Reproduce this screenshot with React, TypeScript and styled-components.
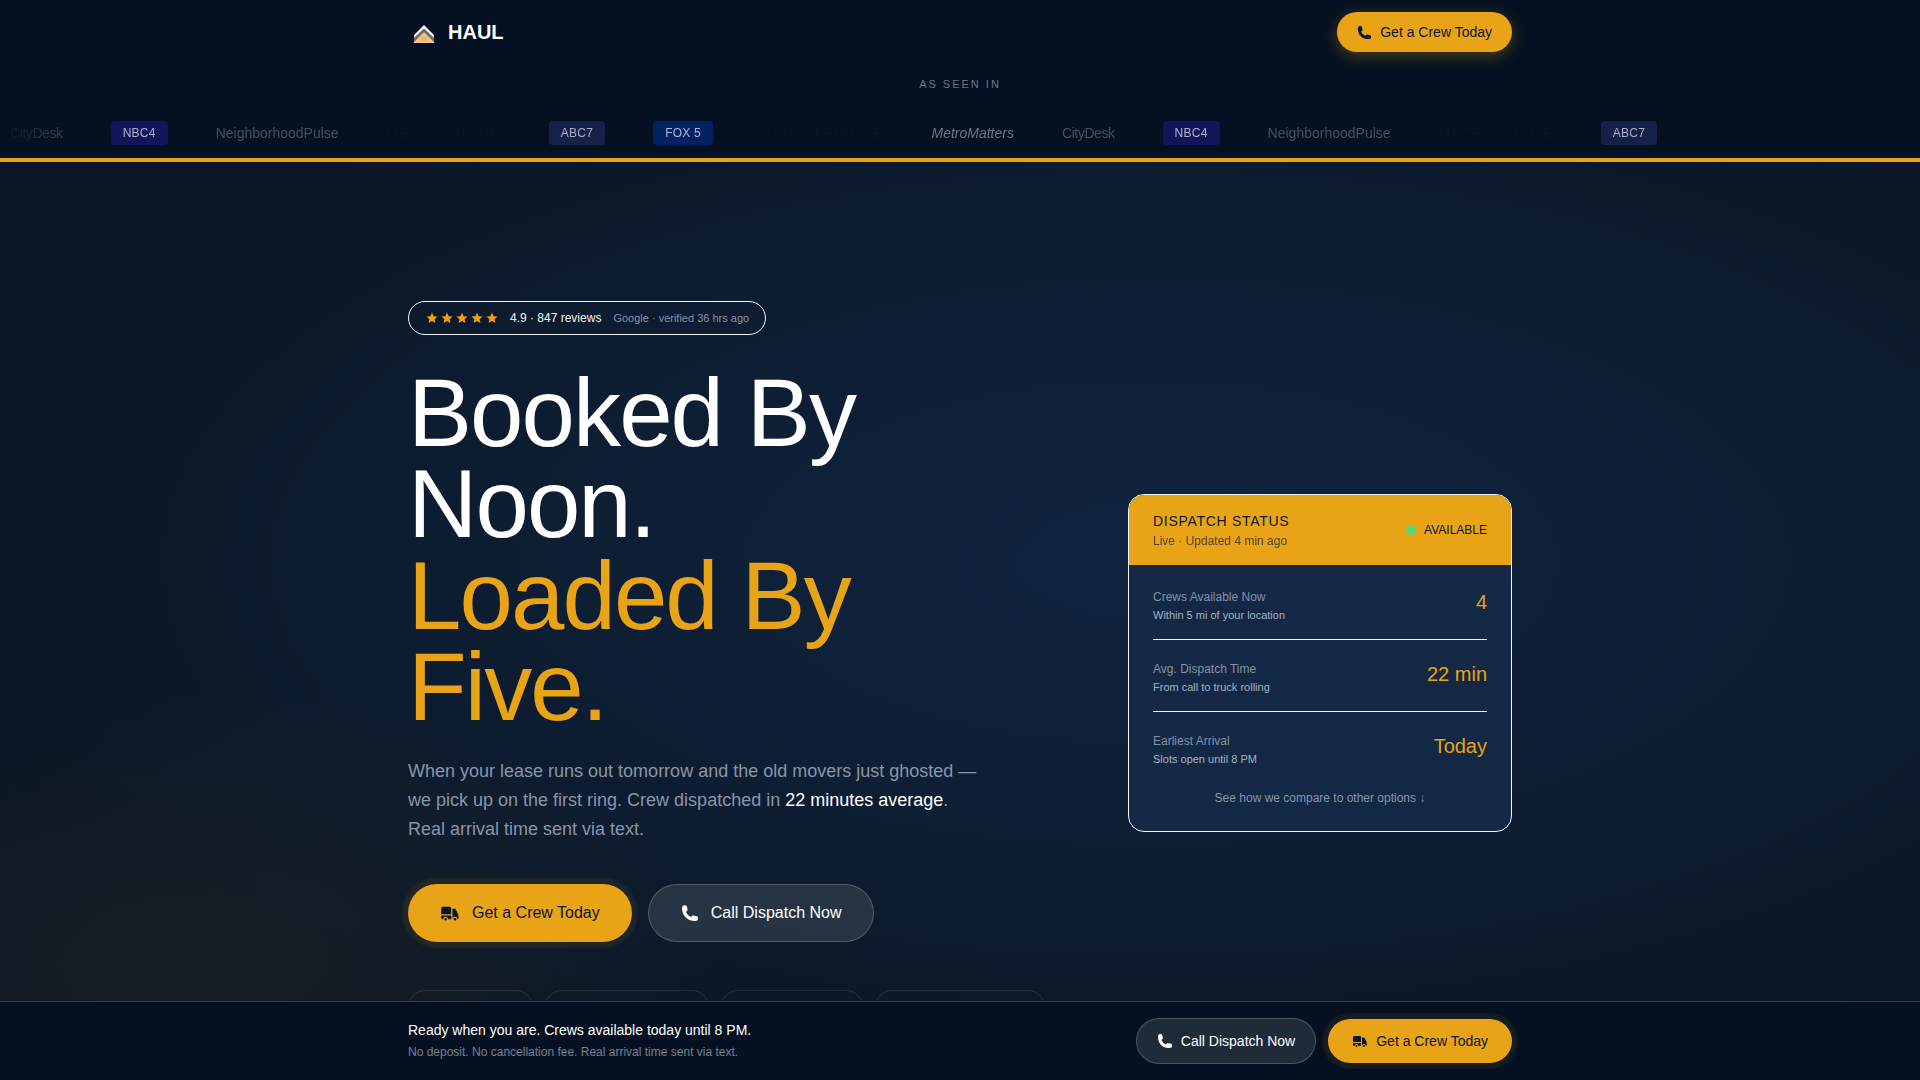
import React from "react";
import styled, { createGlobalStyle, css } from "styled-components";
import { HiPhone, HiTruck } from "react-icons/hi2";

const gold = "#e8a317";
const ink = "#051122";
const paper = "#f1f5f9";

const GlobalStyle = createGlobalStyle`
  *, *::before, *::after { box-sizing: border-box; }
  body {
    margin: 0;
    background: #0a1626;
    color: #ffffff;
    font-family: "Liberation Sans", Arial, sans-serif;
    font-size: 16px;
  }
  h1, h2, p, ul, dl, dd { margin: 0; padding: 0; }
  ul { list-style: none; }
`;

const Scroller = styled.div`
  height: 100vh;
  overflow-x: hidden;
  overflow-y: auto;
  scrollbar-width: none;
`;

const Container = styled.div`
  width: 100%;
  max-width: 1152px;
  margin: 0 auto;
  padding: 0 24px;
`;

/* ---------- Buttons ---------- */

const sizes = {
  small: css`
    padding: 10px 20px;
    gap: 8px;
    font-size: 14px;
    line-height: 20px;
  `,
  medium: css`
    padding: 12px 24px;
    gap: 8px;
    font-size: 14px;
    line-height: 20px;
  `,
  mediumNarrow: css`
    padding: 12px 20px;
    gap: 8px;
    font-size: 14px;
    line-height: 20px;
  `,
  large: css`
    padding: 16px 32px;
    gap: 12px;
    font-size: 16px;
    line-height: 24px;
  `,
};

const Button = styled.button<{ $size: keyof typeof sizes }>`
  display: inline-flex;
  align-items: center;
  justify-content: center;
  border: 0;
  border-radius: 32px;
  font-family: inherit;
  white-space: nowrap;
  cursor: pointer;
  ${(p) => sizes[p.$size]}
`;

const GoldButton = styled(Button)<{ $glow?: boolean }>`
  background: ${gold};
  color: #0a1628;
  box-shadow: ${(p) =>
    p.$glow
      ? "0 4px 16px rgba(232, 163, 23, 0.3)"
      : "0 0 2px 6px rgba(232, 163, 23, 0.08)"};
`;

const GlassButton = styled(Button)`
  background: rgba(255, 255, 255, 0.11);
  border: 1px solid rgba(255, 255, 255, 0.2);
  color: #ffffff;
`;

/* ---------- Header ---------- */

const Header = styled.header`
  background: ${ink};
  border-bottom: 4px solid ${gold};
`;

const TopRow = styled(Container)`
  display: flex;
  align-items: center;
  justify-content: space-between;
  padding-top: 12px;
  padding-bottom: 12px;
`;

const Brand = styled.a`
  display: flex;
  align-items: center;
  gap: 8px;
  color: #ffffff;
  font-size: 20px;
  font-weight: 700;
  text-decoration: none;
`;

const SeenIn = styled.p`
  padding: 12px 0 16px;
  color: #6c7684;
  font-size: 11px;
  line-height: 16px;
  letter-spacing: 2px;
  text-align: center;
`;

const Marquee = styled.div`
  overflow: hidden;
  padding: 13px 0;
  mask-image: linear-gradient(
    to right,
    transparent,
    #000 80px,
    #000 calc(100% - 80px),
    transparent
  );
`;

const Track = styled.ul`
  display: flex;
  align-items: center;
  gap: 48px;
  width: max-content;
  padding-left: 10px;
`;

const Outlet = styled.li<{
  $color: string;
  $fill?: string;
  $italic?: boolean;
  $spacing?: string;
}>`
  color: ${(p) => p.$color};
  font-size: 14px;
  font-style: ${(p) => (p.$italic ? "italic" : "normal")};
  line-height: 24px;
  letter-spacing: ${(p) => p.$spacing ?? "normal"};
  white-space: nowrap;
  ${(p) =>
    p.$fill &&
    css`
      padding: 0 12px;
      border-radius: 4px;
      background: ${p.$fill};
      font-size: 12px;
    `}
`;

/* ---------- Hero ---------- */

const Hero = styled.main`
  display: flex;
  align-items: center;
  min-height: calc(100vh - 79px);
  background:
    radial-gradient(ellipse 40% 40% at 10% 80%, rgba(232, 163, 23, 0.06), transparent 70%),
    radial-gradient(ellipse 70% 60% at 60% 40%, #11253f, transparent 90%),
    #0a1626;
`;

const HeroGrid = styled(Container)`
  display: grid;
  grid-template-columns: minmax(0, 1fr) 384px;
  align-items: center;
  gap: 64px;
`;

const Rating = styled.div`
  display: inline-flex;
  align-items: center;
  gap: 12px;
  height: 34px;
  padding: 0 16px 0 17px;
  border: 1px solid ${paper};
  border-radius: 17px;
  color: ${paper};
  font-size: 12px;
  vertical-align: top;
`;

const Stars = styled.span`
  display: flex;
  gap: 3px;
  color: #f59e0b;
`;

const Source = styled.span`
  color: #8290a3;
  font-size: 11px;
`;

const Headline = styled.h1`
  margin-top: 32px;
  font-size: 96px;
  font-weight: 400;
  line-height: 0.95;
  letter-spacing: -0.02em;
`;

const Accent = styled.span`
  display: block;
  padding-top: 1px;
  color: ${gold};
`;

const Lead = styled.p`
  max-width: 576px;
  margin-top: 24px;
  color: #8896a8;
  font-size: 18px;
  line-height: 1.625;
`;

const Strong = styled.strong`
  color: #ffffff;
  font-weight: 400;
`;

const Actions = styled.div`
  display: flex;
  gap: 16px;
  margin-top: 40px;
`;

const TrustRow = styled.ul`
  display: flex;
  gap: 12px;
  margin-top: 48px;
`;

const TrustPill = styled.li<{ $width: number }>`
  width: ${(p) => p.$width}px;
  height: 34px;
  border: 1px solid rgba(255, 255, 255, 0.1);
  border-radius: 17px;
`;

/* ---------- Dispatch card ---------- */

const Card = styled.section`
  overflow: hidden;
  border: 1px solid ${paper};
  border-radius: 16px;
  background: #122845;
`;

const CardHead = styled.div`
  display: flex;
  align-items: center;
  justify-content: space-between;
  padding: 16px 24px;
  background: ${gold};
  color: #0a1628;
`;

const CardTitle = styled.h2`
  font-size: 14px;
  font-weight: 400;
  line-height: 20px;
  letter-spacing: 0.05em;
`;

const CardNote = styled.p`
  margin-top: 2px;
  font-size: 12px;
  line-height: 16px;
  opacity: 0.7;
`;

const Status = styled.span`
  display: flex;
  align-items: center;
  gap: 8px;
  font-size: 12px;
`;

const Dot = styled.span`
  width: 10px;
  height: 10px;
  border-radius: 50%;
  background: #56d975;
`;

const CardBody = styled.div`
  padding: 23px 24px;
`;

const Stats = styled.dl`
  display: grid;
  gap: 20px;
`;

const Stat = styled.div`
  display: flex;
  align-items: flex-start;
  justify-content: space-between;

  &:not(:last-child) {
    padding-bottom: 15px;
    border-bottom: 1px solid ${paper};
  }
`;

const StatLabel = styled.dt`
  color: #8492a6;
  font-size: 12px;
  line-height: 18px;
`;

const StatHint = styled.span`
  display: block;
  color: #a5b1c2;
  font-size: 11px;
  line-height: 18px;
`;

const StatValue = styled.dd`
  color: ${gold};
  font-size: 20px;
  line-height: 28px;
`;

const Compare = styled.a`
  display: block;
  margin-top: 20px;
  color: #8896a8;
  font-size: 12px;
  line-height: 20px;
  text-align: center;
  text-decoration: none;
`;

/* ---------- Sticky bar ---------- */

const Bar = styled.aside`
  position: fixed;
  inset: auto 0 0;
  background: ${ink};
  border-top: 1px solid rgba(232, 163, 23, 0.3);
`;

const BarRow = styled(Container)`
  display: flex;
  align-items: center;
  justify-content: space-between;
  padding-top: 16px;
  padding-bottom: 16px;
`;

const BarTitle = styled.p`
  font-size: 14px;
  line-height: 20px;
`;

const BarNote = styled.p`
  margin-top: 2px;
  color: #748092;
  font-size: 12px;
  line-height: 20px;
`;

const BarActions = styled.div`
  display: flex;
  align-items: center;
  gap: 12px;
`;

const outlets = [
  { name: "CityDesk", color: "#434d5b", spacing: "-0.03em" },
  { name: "NBC4", color: "#b0b3c8", fill: "#13155a", spacing: "0.02em" },
  { name: "NeighborhoodPulse", color: "#454f5e" },
  { name: "METRO GUIDE", color: "#061528", spacing: "0.1em" },
  { name: "ABC7", color: "#a9afc0", fill: "#16214a", spacing: "0.02em" },
  { name: "FOX 5", color: "#a9b9d5", fill: "#022264", spacing: "0.02em" },
  { name: "DAILY TRIBUNE", color: "#061528", spacing: "0.1em" },
  { name: "MetroMatters", color: "#6a7482", italic: true },
];

const feed = [...outlets, ...outlets.slice(0, 5)];

const stats = [
  { label: "Crews Available Now", hint: "Within 5 mi of your location", value: "4" },
  { label: "Avg. Dispatch Time", hint: "From call to truck rolling", value: "22 min" },
  { label: "Earliest Arrival", hint: "Slots open until 8 PM", value: "Today" },
];

const pillWidths = [125, 164, 142, 170];

function Logo() {
  return (
    <svg width="32" height="32" viewBox="0 0 32 32" aria-hidden="true">
      <path d="M16 14 26 24v3H6v-3z" fill="#f0c684" />
      <path d="M16 12 26 22v4L16 16 6 26v-4z" fill="#6f6a66" />
      <path d="M16 9 26 19v3L16 12.500 6 22v-3z" fill="#f4f8fc" />
      <path d="M14 25v-1.500a2 2 0 0 1 4 0V25" fill="none" stroke="#d99a4e" />
    </svg>
  );
}

function Star() {
  return (
    <svg width="12" height="12" viewBox="0 0 24 24" fill="currentColor" aria-hidden="true">
      <path d="M12 1.200l3.200 7.300 7.900.7-6 5.200 1.800 7.800L12 18.100l-6.900 4.100 1.800-7.800-6-5.200 7.900-.7z" />
    </svg>
  );
}

export default function App() {
  return (
    <>
      <GlobalStyle />
      <Scroller>
        <Header>
          <TopRow>
            <Brand href="#">
              <Logo />
              HAUL
            </Brand>
            <GoldButton type="button" $size="small" $glow>
              <HiPhone size={15} />
              Get a Crew Today
            </GoldButton>
          </TopRow>
          <SeenIn>AS SEEN IN</SeenIn>
          <Marquee>
            <Track>
              {feed.map((o, i) => (
                <Outlet
                  key={i}
                  $color={o.color}
                  $fill={o.fill}
                  $italic={o.italic}
                  $spacing={o.spacing}
                >
                  {o.name}
                </Outlet>
              ))}
            </Track>
          </Marquee>
        </Header>

        <Hero>
          <HeroGrid>
            <div>
              <Rating>
                <Stars>
                  {[0, 1, 2, 3, 4].map((n) => (
                    <Star key={n} />
                  ))}
                </Stars>
                <span>4.9 · 847 reviews</span>
                <Source>Google · verified 36 hrs ago</Source>
              </Rating>
              <Headline>
                Booked By Noon.
                <Accent>Loaded By Five.</Accent>
              </Headline>
              <Lead>
                When your lease runs out tomorrow and the old movers just ghosted — we pick up on
                the first ring. Crew dispatched in <Strong>22 minutes average</Strong>. Real
                arrival time sent via text.
              </Lead>
              <Actions>
                <GoldButton type="button" $size="large">
                  <HiTruck size={20} />
                  Get a Crew Today
                </GoldButton>
                <GlassButton type="button" $size="large">
                  <HiPhone size={18} />
                  Call Dispatch Now
                </GlassButton>
              </Actions>
              <TrustRow aria-hidden="true">
                {pillWidths.map((w) => (
                  <TrustPill key={w} $width={w} />
                ))}
              </TrustRow>
            </div>

            <Card>
              <CardHead>
                <div>
                  <CardTitle>DISPATCH STATUS</CardTitle>
                  <CardNote>Live · Updated 4 min ago</CardNote>
                </div>
                <Status>
                  <Dot />
                  AVAILABLE
                </Status>
              </CardHead>
              <CardBody>
                <Stats>
                  {stats.map((s) => (
                    <Stat key={s.label}>
                      <StatLabel>
                        {s.label}
                        <StatHint>{s.hint}</StatHint>
                      </StatLabel>
                      <StatValue>{s.value}</StatValue>
                    </Stat>
                  ))}
                </Stats>
                <Compare href="#compare">See how we compare to other options ↓</Compare>
              </CardBody>
            </Card>
          </HeroGrid>
        </Hero>
      </Scroller>

      <Bar>
        <BarRow>
          <div>
            <BarTitle>Ready when you are. Crews available today until 8 PM.</BarTitle>
            <BarNote>No deposit. No cancellation fee. Real arrival time sent via text.</BarNote>
          </div>
          <BarActions>
            <GlassButton type="button" $size="mediumNarrow">
              <HiPhone size={16} />
              Call Dispatch Now
            </GlassButton>
            <GoldButton type="button" $size="medium">
              <HiTruck size={16} />
              Get a Crew Today
            </GoldButton>
          </BarActions>
        </BarRow>
      </Bar>
    </>
  );
}
